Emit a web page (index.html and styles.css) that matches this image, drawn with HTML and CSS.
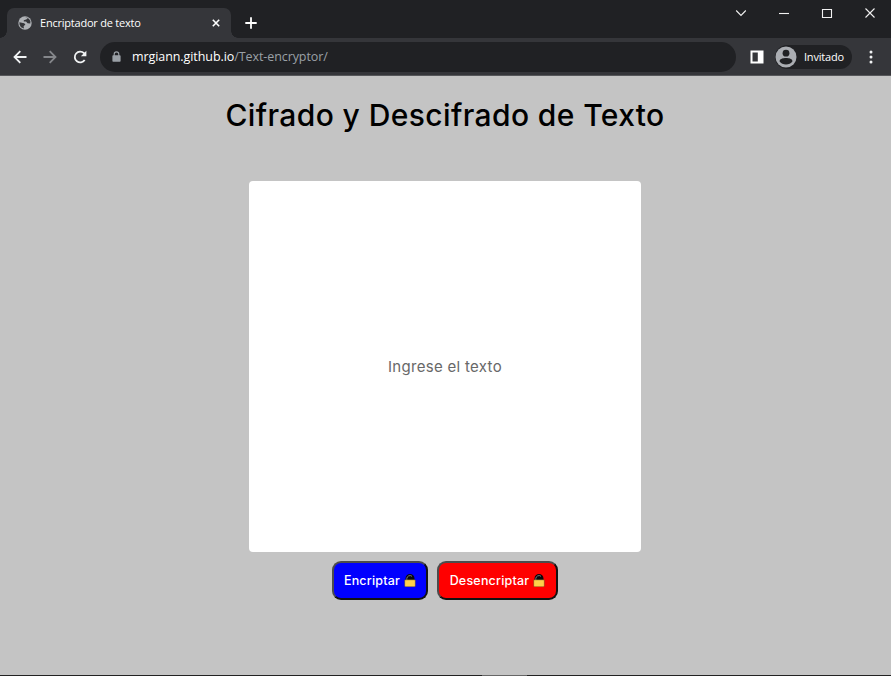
FILE: index.html
```html
<!DOCTYPE html>
<html lang="es">
<head>
<meta charset="utf-8">
<title>Encriptador de texto</title>
<link rel="stylesheet" href="styles.css">
</head>
<body>
<div class="window">
  <header class="titlebar">
    <div class="tab">
      <svg class="globe" viewBox="0 0 14 14"><circle cx="7" cy="7" r="6.7" fill="#aeb1b5"/><path d="M1.4 6.2 6.2 7.2 7.4 8.6 5.6 10.2 6 12.4 3 11.2 1.6 8.8ZM7 1.4 9.8 2.2 8.2 3.4 5.8 4.2 5.8 5.4 8 5.4 9.6 7.2 12.3 7.6 12.4 5 11 3 9.4 1.8Z" fill="#35363a"/></svg>
      <span class="tab-title">Encriptador de texto</span>
      <svg class="tab-close" viewBox="0 0 8 8"><path d="M.8.8 7.2 7.2M7.2.8.8 7.2" stroke="#fff" stroke-width="1.6"/></svg>
    </div>
    <svg class="new-tab" viewBox="0 0 12 12"><path d="M6 .3V11.7M.3 6H11.7" stroke="#fff" stroke-width="1.8"/></svg>
    <div class="controls">
      <svg viewBox="0 0 12 12"><path d="M1.2 3.5 6 8.5 10.8 3.5"/></svg>
      <svg viewBox="0 0 12 12"><path d="M1 6.5H11"/></svg>
      <svg viewBox="0 0 12 12"><path d="M1.5 2.5H10.5V10.5H1.5Z"/></svg>
      <svg viewBox="0 0 12 12"><path d="M1.5 1.5 10.5 10.5M10.5 1.5 1.5 10.5"/></svg>
    </div>
  </header>
  <nav class="toolbar">
    <svg class="nav-icon" viewBox="0 0 14 14"><path d="M13.5 7H1.5M7.3 1.2 1.5 7 7.3 12.8"/></svg>
    <svg class="nav-icon dim" viewBox="0 0 14 14"><path d="M.5 7H12.5M6.7 1.2 12.5 7 6.7 12.8"/></svg>
    <svg class="nav-icon" viewBox="0 0 14 14"><path d="M11.7 10A5.4 5.4 0 1 1 11 3.2L12.3 4.6"/><path d="M13.4.8V6.3H7.9Z" class="solid"/></svg>
    <div class="address">
      <svg class="lock" viewBox="0 0 9 11"><path d="M2.2 5V3.2a2.3 2.3 0 0 1 4.6 0V5" fill="none" stroke="#9aa0a6" stroke-width="1.1"/><rect x=".4" y="4.3" width="8.2" height="6.4" rx=".8" fill="#9aa0a6"/></svg>
      <span class="url"><b>mrgiann.github.io</b><span>/Text-encryptor/</span></span>
    </div>
    <svg class="panel-icon" viewBox="0 0 14 14"><path d="M.5.5H13.5V13.5H.5ZM2.5 2.5V11.5H7.8V2.5Z" fill="#fff" fill-rule="evenodd"/></svg>
    <div class="profile">
      <svg viewBox="0 0 22 22"><circle cx="11" cy="11" r="10.5" fill="#aaadb2"/><circle cx="11" cy="7.2" r="3.4" fill="#202124"/><path d="M4.5 15.2C5 12.8 8 12.1 11 12.1S17 12.8 17.5 15.2C16 17.3 13.7 18.5 11 18.5S6 17.3 4.5 15.2Z" fill="#202124"/></svg>
      <span>Invitado</span>
    </div>
    <svg class="dots" viewBox="0 0 4 14"><circle cx="2" cy="2" r="1.5"/><circle cx="2" cy="7" r="1.5"/><circle cx="2" cy="12" r="1.5"/></svg>
  </nav>
  <main class="page">
    <h1>Cifrado y Descifrado de Texto</h1>
    <div class="box"><span>Ingrese el texto</span></div>
    <div class="actions">
      <button class="btn encrypt"><span>Encriptar</span>
        <svg viewBox="0 0 12 13"><path d="M1.5 7V4.5a4.5 4.5 0 0 1 9 0V7Z" fill="#08080c"/><path d="M2.8 6V4.6a3.2 3.2 0 0 1 5.200-2.300" fill="none" stroke="#8e9096" stroke-width=".8"/><rect x=".7" y="5.8" width="10.6" height="7" rx=".8" fill="#ffd04a" stroke="#3a3418" stroke-width=".4"/></svg>
      </button>
      <button class="btn decrypt"><span>Desencriptar</span>
        <svg viewBox="0 0 12 13"><path d="M1.5 7V4.5a4.5 4.5 0 0 1 9 0V7Z" fill="#08080c"/><path d="M2.8 6V4.6a3.2 3.2 0 0 1 5.200-2.300" fill="none" stroke="#8e9096" stroke-width=".8"/><rect x=".7" y="5.8" width="10.6" height="7" rx=".8" fill="#ffd04a" stroke="#3a3418" stroke-width=".4"/></svg>
      </button>
    </div>
  </main>
  <footer class="edge"><span></span></footer>
</div>
</body>
</html>
```
FILE: styles.css
```css
* { box-sizing: border-box; }
body { margin: 0; overflow: hidden; }
svg { display: block; flex: none; }
.window { width: 891px; height: 676px; display: flex; flex-direction: column; background: #c4c4c4; }

.titlebar { height: 38px; flex: none; display: flex; background: #202124; padding-left: 7px; }
.tab { position: relative; width: 224px; height: 30px; margin-top: 8px; padding: 0 11.5px 1px 11px; display: flex; align-items: center; background: #35363a; border-radius: 7px 7px 0 0; }
.tab::before, .tab::after { content: ""; position: absolute; bottom: 0; width: 7px; height: 7px; }
.tab::before { left: -7px; background: radial-gradient(circle at 0 0, transparent 6.5px, #35363a 7px); }
.tab::after { right: -7px; background: radial-gradient(circle at 100% 0, transparent 6.5px, #35363a 7px); }
.globe { width: 14px; height: 14px; }
.tab-title { margin-left: 8px; font: 11px "Open Sans", sans-serif; letter-spacing: -.22px; color: #fff; white-space: nowrap; }
.tab-close { width: 8px; height: 8px; margin-left: auto; }
.new-tab { width: 12px; height: 12px; margin: 17px 0 0 14px; }
.controls { display: flex; gap: 31px; margin: 7px 15.5px 0 auto; }
.controls svg { width: 12px; height: 12px; fill: none; stroke: #f1f1f1; stroke-width: 1.1; }

.toolbar { height: 38px; flex: none; display: flex; align-items: center; background: #35363a; border-bottom: 1px solid #56575a; padding: 0 0 0 12.5px; }
.nav-icon { width: 14px; height: 14px; margin-right: 16px; fill: none; stroke: #f1f3f4; stroke-width: 1.8; }
.nav-icon.dim { stroke: #85878b; }
.nav-icon .solid { fill: #f1f3f4; stroke: none; }
.address { width: 636px; height: 30px; margin-left: -2.5px; padding-left: 12px; display: flex; align-items: center; border-radius: 15px; background: #202124; }
.lock { width: 9px; height: 11px; }
.url { margin-left: 11px; font: 12.5px "Open Sans", sans-serif; letter-spacing: -.08px; color: #9aa0a6; white-space: nowrap; }
.url b { font-weight: 500; color: #fff; }
.panel-icon { width: 14px; height: 14px; margin-left: 13.5px; }
.profile { width: 77px; height: 24px; margin-left: 11.5px; display: flex; align-items: center; gap: 7px; border-radius: 12px; background: #202124; font: 500 11px "Open Sans", sans-serif; letter-spacing: -.2px; color: #fff; }
.profile span { padding-bottom: 1px; }
.profile svg { width: 22px; height: 22px; }
.dots { width: 4px; height: 14px; margin-left: 17px; fill: #f1f3f4; }

.page { flex: 1; display: flex; flex-direction: column; align-items: center; padding-right: 1px; font-family: Inter, sans-serif; }
h1 { margin: 17px 0 0; height: 44px; line-height: 44px; font-size: 30px; font-weight: 500; letter-spacing: .39px; white-space: nowrap; color: #000; }
.box { width: 392px; height: 371px; margin-top: 44px; display: flex; align-items: center; justify-content: center; border-radius: 4px; background: #fff; font-size: 15px; letter-spacing: .3px; color: #686868; }
.actions { display: flex; gap: 9px; margin-top: 9px; }
.btn { height: 39px; padding: 0; display: flex; align-items: center; justify-content: center; gap: 4px; border: 2px solid; border-color: #4c4c4c #111 #111 #4c4c4c; border-radius: 9px; font: 500 12.5px Inter, sans-serif; letter-spacing: .2px; color: #fff; white-space: nowrap; }
.btn svg { width: 12px; height: 13px; }
.encrypt { width: 96px; background: #00f; }
.decrypt { width: 121px; background: #f00; }
.edge { height: 1px; flex: none; display: flex; justify-content: center; background: #222; }
.edge span { width: 45px; margin-left: 117px; background: #666; }
```
